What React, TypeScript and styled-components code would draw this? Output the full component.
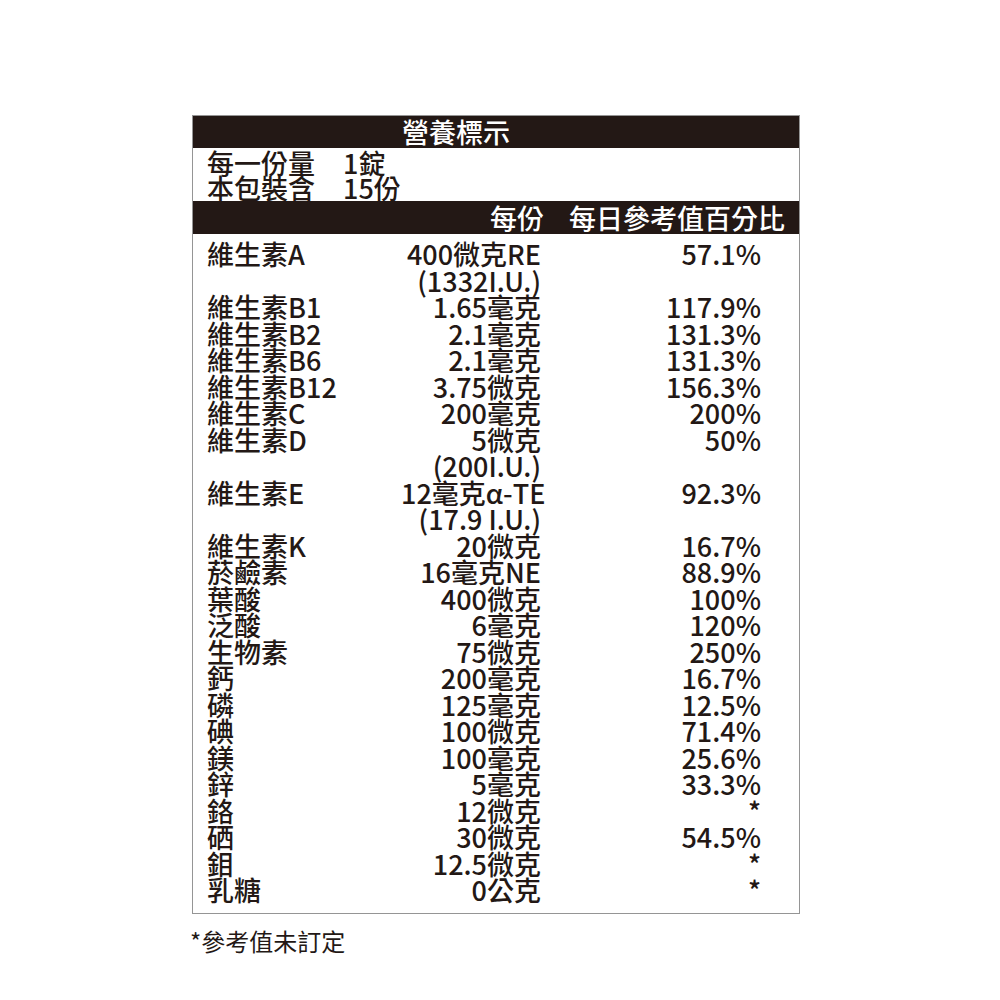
import styled, { createGlobalStyle } from 'styled-components';

type Nutrient = {
  name: string;
  amount: string[];
  daily: string;
};

const NUTRIENTS: Nutrient[] = [
  { name: '維生素A', amount: ['400微克RE', '(1332I.U.)'], daily: '57.1%' },
  { name: '維生素B1', amount: ['1.65毫克'], daily: '117.9%' },
  { name: '維生素B2', amount: ['2.1毫克'], daily: '131.3%' },
  { name: '維生素B6', amount: ['2.1毫克'], daily: '131.3%' },
  { name: '維生素B12', amount: ['3.75微克'], daily: '156.3%' },
  { name: '維生素C', amount: ['200毫克'], daily: '200%' },
  { name: '維生素D', amount: ['5微克', '(200I.U.)'], daily: '50%' },
  { name: '維生素E', amount: ['12毫克α-TE', '(17.9 I.U.)'], daily: '92.3%' },
  { name: '維生素K', amount: ['20微克'], daily: '16.7%' },
  { name: '菸鹼素', amount: ['16毫克NE'], daily: '88.9%' },
  { name: '葉酸', amount: ['400微克'], daily: '100%' },
  { name: '泛酸', amount: ['6毫克'], daily: '120%' },
  { name: '生物素', amount: ['75微克'], daily: '250%' },
  { name: '鈣', amount: ['200毫克'], daily: '16.7%' },
  { name: '磷', amount: ['125毫克'], daily: '12.5%' },
  { name: '碘', amount: ['100微克'], daily: '71.4%' },
  { name: '鎂', amount: ['100毫克'], daily: '25.6%' },
  { name: '鋅', amount: ['5毫克'], daily: '33.3%' },
  { name: '鉻', amount: ['12微克'], daily: '*' },
  { name: '硒', amount: ['30微克'], daily: '54.5%' },
  { name: '鉬', amount: ['12.5微克'], daily: '*' },
  { name: '乳糖', amount: ['0公克'], daily: '*' },
];

const GlobalStyle = createGlobalStyle`
  html, body {
    margin: 0;
    background: #ffffff;
  }
  body {
    font-family: "Noto Sans CJK TC", "Noto Sans", sans-serif;
    color: #231815;
  }
`;

export default function App() {
  return (
    <>
      <GlobalStyle />
      <S.Page>
        <S.Label>
          <S.TitleBar>營養標示</S.TitleBar>
          <S.Serving>
            <S.ServingRow>
              <span>每一份量</span>
              <span>1錠</span>
            </S.ServingRow>
            <S.ServingRow>
              <span>本包裝含</span>
              <span>15份</span>
            </S.ServingRow>
          </S.Serving>
          <S.HeaderBar>
            <span>每份</span>
            <span>每日參考值百分比</span>
          </S.HeaderBar>
          <S.Body>
            {NUTRIENTS.map((item) => (
              <S.Row key={item.name}>
                <S.Name>{item.name}</S.Name>
                <S.Amount>
                  {item.amount.map((line) => (
                    <div key={line}>{line}</div>
                  ))}
                </S.Amount>
                <S.Daily>{item.daily}</S.Daily>
              </S.Row>
            ))}
          </S.Body>
        </S.Label>
        <S.Note>*參考值未訂定</S.Note>
      </S.Page>
    </>
  );
}

const S = {
  Page: styled.div`
    padding: 115px 0 0 192px;
  `,
  Label: styled.div`
    width: 608px;
    box-sizing: border-box;
    border: 1.5px solid #959595;
    font-size: 27px;
    font-weight: 500;
  `,
  TitleBar: styled.div`
    height: 32px;
    line-height: 32px;
    padding-left: 209px;
    background: #231815;
    color: #ffffff;
    font-size: 27px;
  `,
  Serving: styled.div`
    padding: 2px 0 1px 14px;
    line-height: 25px;
  `,
  ServingRow: styled.div`
    display: grid;
    grid-template-columns: 136px auto;
  `,
  HeaderBar: styled.div`
    display: flex;
    justify-content: flex-end;
    gap: 25px;
    height: 33px;
    line-height: 33px;
    padding-right: 14px;
    background: #231815;
    color: #ffffff;
  `,
  Body: styled.div`
    padding: 7px 38px 9px 14px;
    line-height: 26.5px;
  `,
  Row: styled.div`
    display: grid;
    grid-template-columns: 1fr 140px 220px;
    align-items: start;
  `,
  Name: styled.div`
    white-space: nowrap;
  `,
  Amount: styled.div`
    text-align: right;
    white-space: nowrap;
  `,
  Daily: styled.div`
    text-align: right;
  `,
  Note: styled.div`
    margin: 13px 0 0 -2px;
    font-size: 24px;
    line-height: 28px;
    font-weight: 400;
  `,
};
